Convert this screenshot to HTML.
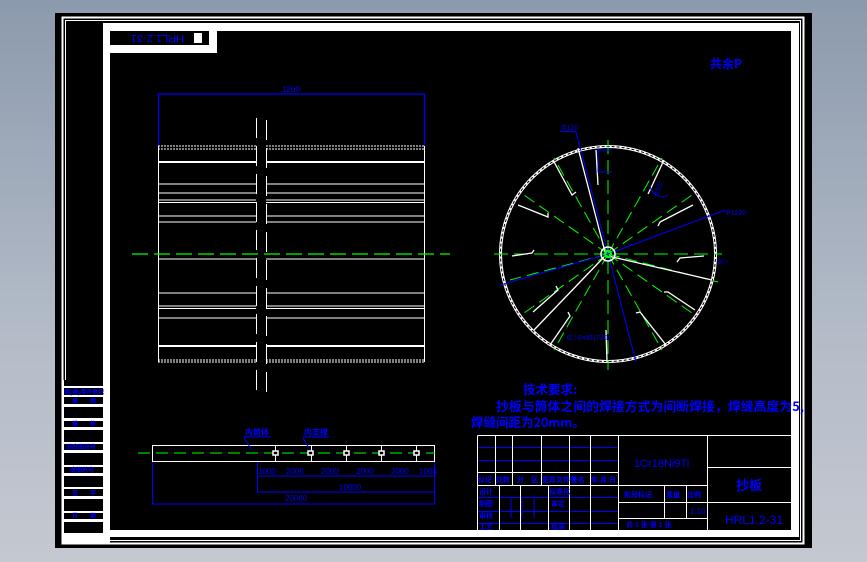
<!DOCTYPE html>
<html><head><meta charset="utf-8"><style>
html,body{margin:0;padding:0;}
body{width:867px;height:562px;overflow:hidden;background:linear-gradient(180deg,#8c9aad 0%,#b4bcc8 60%,#c4c8d0 100%);}
svg{position:absolute;left:0;top:0;}
text{font-family:"Liberation Sans","Noto Sans CJK SC",sans-serif;fill:#0000ff;}
.cj{font-family:"Noto Sans CJK SC","WenQuanYi Zen Hei",sans-serif;font-weight:bold;}
</style></head><body>
<svg width="867" height="562" viewBox="0 0 867 562" xmlns="http://www.w3.org/2000/svg">
<rect x="55" y="13" width="757" height="535" fill="#000"/>
<rect x="62.5" y="17.5" width="741" height="526" fill="none" stroke="#fff" stroke-width="2"/>
<rect x="65.5" y="20.5" width="735" height="520" fill="none" stroke="#fff" stroke-width="1"/>
<path d="M103 23 H799 V537 H103 Z M110 31 V530 H791 V31 Z" fill="#fff" fill-rule="evenodd"/>
<rect x="103" y="23" width="114" height="30" fill="#fff"/>
<rect x="110" y="31" width="99" height="14" fill="#000"/>
<text x="126" y="43" font-size="11" transform="rotate(180 155 39)">HRL1.2-31</text>
<rect x="194" y="33" width="8" height="10" fill="#fff"/>
<rect x="62" y="380" width="48" height="164" fill="#fff"/>
<g fill="#000">
<rect x="64" y="380" width="39" height="6"/><rect x="64" y="388" width="39" height="7"/>
<rect x="64" y="397" width="39" height="7"/><rect x="64" y="407" width="39" height="11"/>
<rect x="64" y="421" width="39" height="6"/><rect x="64" y="430" width="39" height="12"/>
<rect x="64" y="444" width="39" height="6"/><rect x="64" y="453" width="39" height="12"/>
<rect x="64" y="467" width="39" height="6"/><rect x="64" y="476" width="39" height="11"/>
<rect x="64" y="489" width="39" height="7"/><rect x="64" y="499" width="39" height="12"/>
<rect x="64" y="513" width="39" height="6"/><rect x="64" y="522" width="39" height="11"/>
</g>
<g font-size="6" class="cj">
<text x="64" y="394">借(通)用件登记</text><text x="72" y="403">描　　图</text>
<text x="72" y="426">描　　校</text><text x="66" y="449">旧底图总号</text>
<text x="70" y="472">底图总号</text><text x="72" y="495">签　　字</text>
<text x="72" y="518">日　　期</text>
</g>
<g stroke="#00f" stroke-width="1.2" fill="none"><path d="M158.5 146 V94 H424.5 V146"/></g>
<text x="282" y="92" font-size="8">1200</text>
<g stroke="#fff" stroke-width="1" fill="none">
<path d="M158.5 146 V362 M424.5 146 V362"/>
<path d="M158 146H256M266 146H425M158 149H256M266 149H425" stroke-dasharray="2 1"/>
<path d="M158 360H256M266 360H425M158 362H256M266 362H425" stroke-dasharray="2 1"/>
<path d="M158 162H256M266 162H425" stroke-width="2"/>
<path d="M158 346H256M266 346H425" stroke-width="2"/>
<path d="M158 184H256M266 184H425M158 193H256M266 193H425M158 200H256M266 200H425M158 202.5H256M266 202.5H425M158 216H256M266 216H425M158 222H256M266 222H425M158 259H256M266 259H425M158 293H256M266 293H425M158 306H256M266 306H425M158 308.5H256M266 308.5H425M158 318H256M266 318H425"/>
<path d="M256.5 118V395M266.5 120V395" stroke-dasharray="20 8"/>
</g>
<path d="M132 254H450" stroke="#0f0" stroke-width="1.2" stroke-dasharray="16 6"/>
<g fill="none">
<circle cx="608" cy="254" r="107.5" stroke="#fff" stroke-width="3"/>
<circle cx="608" cy="254" r="107.5" stroke="#000" stroke-width="1" stroke-dasharray="3 2"/>
<g stroke="#0f0" stroke-width="1">
<path d="M608 140V370M494 254H722" stroke-dasharray="14 6"/>
<path d="M608 254 L554 158 M608 254 L524 195 M608 254 L662 158 M608 254L692 195M608 254L718 282M608 254L692 313M608 254L662 350M608 254L554 350M608 254L524 313M608 254L510 280" stroke-dasharray="12 6"/>
</g>
<g stroke="#fff" stroke-width="1.3">
<path d="M578 148 L605 252 M608 256 L712 280 M604 257 L534 330"/>
<path d="M553 160 L572 195 L576 192 M664 160 L650 190 L648 194 M693 205 L660 222 L658 226 M704 256 L680 258 L677 262 M518 205 L548 217 L548 213 M512 256 L532 253 L534 250 M533 312 L558 290 L556 286 M695 310 L668 292 L664 292 M550 345 L570 316 L568 312 M666 345 L640 312 L636 313 M607 362 L606 330 M596 150 L598 185"/>
</g>
<g stroke="#00f" stroke-width="1">
<path d="M608 254L725 210 M608 254 L500 285 M608 254 L636 362 M608 254 L576 132 L560 131"/>
<path d="M612 150 H598 V172 H612 M650 185 A12 12 0 0 0 668 195"/>
</g>
<circle cx="608" cy="254" r="7" stroke="#fff" stroke-width="1.5"/>
<circle cx="608" cy="254" r="3" stroke="#0f0" stroke-width="2"/>
</g>
<text x="561" y="130" font-size="7">Φ120</text>
<text x="725" y="215" font-size="7">Φ1220</text>
<text x="718" y="264" font-size="7">6▷</text>
<text x="567" y="340" font-size="7">6▷8×81(720)</text>
<text x="651" y="195" font-size="7" transform="rotate(-70 655 190)">150°</text>
<text x="710" y="68" font-size="12" class="cj">共余P</text>
<g stroke="#fff" stroke-width="1" fill="none">
<rect x="152.5" y="445.5" width="282" height="16"/>
</g>
<path d="M138 453H435" stroke="#0f0" stroke-width="1" stroke-dasharray="12 6"/>
<g stroke="#fff" stroke-width="1.5" fill="#000">
<path d="M275.5 446V461M311.5 446V461M346.5 446V461M381.5 446V461M416.5 446V461" stroke-width="1"/>
<rect x="273" y="451" width="5" height="4"/><rect x="308" y="451" width="5" height="4"/><rect x="344" y="451" width="5" height="4"/><rect x="379" y="451" width="5" height="4"/><rect x="414" y="451" width="5" height="4"/>
</g>
<g stroke="#00f" stroke-width="1" fill="none">
<path d="M257.5 462V493M152.5 462V504M434.5 462V504M257 476H435M257 492H435M152 504H435"/>
<path d="M244 438L252 450M303 438L310 450M244 437H271M303 437H329"/>
</g>
<g font-size="8">
<text x="258" y="474">1000</text><text x="286" y="474">2000</text><text x="321" y="474">2000</text><text x="356" y="474">2000</text><text x="391" y="474">2000</text><text x="419" y="474">1000</text>
<text x="339" y="490">10000</text><text x="285" y="501">20000</text>
</g>
<text x="245" y="435" font-size="8" class="cj">内筒体</text>
<text x="304" y="435" font-size="8" class="cj">内支撑</text>
<text x="523" y="394" font-size="12.5" class="cj">技术要求:</text>
<text x="496" y="411" font-size="12.5" class="cj" textLength="308" lengthAdjust="spacingAndGlyphs">抄板与筒体之间的焊接方式为间断焊接，焊缝高度为5,</text>
<text x="471" y="427" font-size="12.5" class="cj">焊缝间距为20mm。</text>
<g stroke="#00f" stroke-width="1" fill="none">
<path d="M477 447.5H618M477 460.5H618M477 497.5H618M477 511.5H618M477 523.5H618"/>
<path d="M511 498V518M522 498V518M534 498V518"/>
</g>
<g stroke="#fff" stroke-width="1" fill="none">
<path d="M477.5 435.5H791M477.5 435.5V530M495.5 436V485M512.5 436V485M541.5 436V485M569.5 436V485M590.5 436V485M618.5 436V530M707.5 436V530"/>
<path d="M477 472.5H618M477 485.5H618M618 485.5H707M618 502.5H707M618 518.5H707M707 467.5H791M707 502.5H791"/>
<path d="M499.5 486V530M520.5 486V530M548.5 486V530M569.5 486V530M590.5 486V530M664.5 486V518M686.5 486V518"/>
</g>
<g font-size="7" class="cj">
<text x="478" y="482">标记</text><text x="496" y="482">处数</text><text x="517" y="482">分　区</text><text x="542" y="482">更改文件号</text><text x="571" y="482">签名</text><text x="591" y="482">年.月.日</text>
<text x="479" y="494">设计</text><text x="479" y="506">制图</text><text x="479" y="518">审核</text><text x="479" y="529">工艺</text>
<text x="549" y="494">标准化</text><text x="551" y="506">审定</text><text x="551" y="529">批准</text>
<text x="624" y="497">阶段标记</text><text x="666" y="497">重量</text><text x="687" y="497">比例</text>
<text x="626" y="527">共 1 张  第 1 张</text>
</g>
<text x="690" y="514" font-size="8">1:10</text>
<text x="634" y="467" font-size="11">1Cr18Ni9Ti</text>
<text x="736" y="490" font-size="13" class="cj">抄板</text>
<text x="725" y="524" font-size="12">HRL1.2-31</text>
</svg>
</body></html>
